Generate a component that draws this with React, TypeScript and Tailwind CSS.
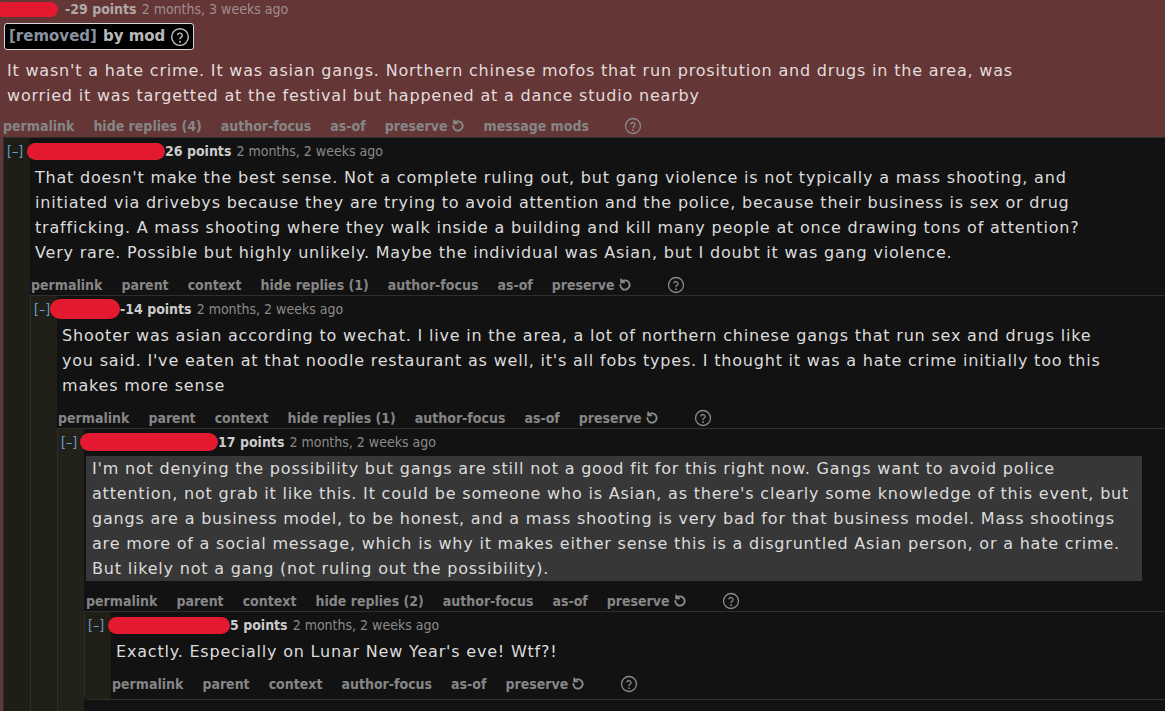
import { ReactNode } from "react";

const meta = "font-['DejaVu_Sans_Condensed','Liberation_Sans_Narrow','Liberation_Sans',sans-serif]";
const body = "font-['DejaVu_Sans','Verdana',sans-serif] text-[16px] leading-[25px] tracking-[0.8px] whitespace-nowrap";

const Help = ({ size = 18 }: { size?: number }) => (
  <svg width={size} height={size} viewBox="0 0 24 24" fill="none" stroke="currentColor" strokeWidth="1.7" strokeLinecap="round">
    <circle cx="12" cy="12" r="10" />
    <path d="M9.2 9.2a2.9 2.9 0 0 1 5.6 1c0 1.9-2.8 2.5-2.8 4" />
    <path d="M12 17.6h.01" strokeWidth="2.4" />
  </svg>
);

const Preserve = () => (
  <svg width="14" height="14" viewBox="0 0 24 24" fill="none" stroke="currentColor" strokeWidth="3.2" strokeLinecap="round">
    <path d="M4 12a8 8 0 1 0 2.6-5.9" />
    <path d="M5.5 2.5v5h5" />
  </svg>
);

// redaction scribble over the username
const Blob = ({ className }: { className: string }) => (
  <span className={`inline-block shrink-0 rounded-full bg-[#e3192f] ${className}`} />
);

const Buttons = ({ items, className = "" }: { items: string[]; className?: string }) => (
  <ul className={`flex items-center h-[16px] text-[14px] font-bold text-[#868686] ${meta} ${className}`}>
    {items.map((b) => (
      <li key={b} className="mr-[19px] flex items-center whitespace-nowrap">
        {b}
        {b === "preserve" && (
          <span className="ml-[3px] text-[#8a8a8a]">
            <Preserve />
          </span>
        )}
      </li>
    ))}
    <li className="ml-[16px] text-[#8a8a8a]">
      <Help />
    </li>
  </ul>
);

type CommentProps = {
  blob: string;
  points: string;
  lines: string[];
  buttons: string[];
  boxed?: boolean;
  last?: boolean;
  strip: string;
  children?: ReactNode;
};

const Comment = ({ blob, points, lines, buttons, boxed, last, strip, children }: CommentProps) => (
  <div
    className={`flex border-t border-l border-[#2e2e2e] ${strip} ${
      last ? "border-b rounded-bl-[5px]" : ""
    }`}
  >
    <div className={`w-[26px] shrink-0 pt-[5px] pl-[3px] text-[14px] leading-[16px] text-[#6a9ed3] ${meta}`}>
      [–]
    </div>
    <div className={`flex-1 min-w-0 bg-[#121212] ${last ? "pb-[7px]" : "pb-[2px]"}`}>
      <div className={`flex items-center h-[16px] mt-[5px] text-[14px] ${meta}`}>
        <Blob className={blob} />
        <span className="font-bold text-[#cbcbcb]">{points}</span>
        <span className="ml-[5px] text-[#8a8a8a]">{`2 months, 2 weeks ago`}</span>
      </div>
      <div
        className={`mt-[6px] text-[#dcdcdc] ${body} ${
          boxed ? "ml-[2px] w-[1056px] px-[6px] bg-[#373737]" : "pl-[5px]"
        }`}
      >
        {lines.map((l) => (
          <div key={l}>{l}</div>
        ))}
      </div>
      <Buttons items={buttons} className={`mt-[12px] ${boxed ? "pl-[2px]" : "pl-[1px]"}`} />
      {children && <div className="mt-[2px]">{children}</div>}
    </div>
  </div>
);

export default function App() {
  return (
    <div className="h-screen overflow-hidden bg-[#643636]">
      <div className={`flex items-center h-[16px] mt-[1px] text-[14px] ${meta}`}>
        <Blob className="w-[62px] h-[15px] ml-[-4px]" />
        <span className="ml-[7px] font-bold text-[#b0a9a9]">-29 points</span>
        <span className="ml-[5px] text-[#a08e8e]">2 months, 3 weeks ago</span>
      </div>
      <div className="mt-[6px] ml-[4px] inline-flex items-center h-[27px] pl-[4px] pr-[3px] bg-black border border-[#d8d8d8] rounded-[3px] font-['DejaVu_Sans',sans-serif] text-[15px] font-bold">
        <span className="text-[#8892a0]">[removed]</span>
        <span className="ml-[6px] text-[#b9b9b9]">by mod</span>
        <span className="ml-[5px] text-[#c0c0c0]">
          <Help size={20} />
        </span>
      </div>
      <div className={`mt-[8px] pl-[7px] text-[#e2dcdc] ${body}`}>
        <div>It wasn't a hate crime. It was asian gangs. Northern chinese mofos that run prositution and drugs in the area, was</div>
        <div>worried it was targetted at the festival but happened at a dance studio nearby</div>
      </div>
      <Buttons
        className="mt-[10px] pl-[3px] text-[#8e8585]"
        items={["permalink", "hide replies (4)", "author-focus", "as-of", "preserve", "message mods"]}
      />
      <div className="mt-[3px] ml-[3px]">
        <Comment
          strip="bg-[#1e1e16]"
          blob="w-[138px] h-[17px] ml-[-3px]"
          points="26 points"
          lines={[
            "That doesn't make the best sense. Not a complete ruling out, but gang violence is not typically a mass shooting, and",
            "initiated via drivebys because they are trying to avoid attention and the police, because their business is sex or drug",
            "trafficking. A mass shooting where they walk inside a building and kill many people at once drawing tons of attention?",
            "Very rare. Possible but highly unlikely. Maybe the individual was Asian, but I doubt it was gang violence.",
          ]}
          buttons={["permalink", "parent", "context", "hide replies (1)", "author-focus", "as-of", "preserve"]}
        >
          <Comment
            strip="bg-[#1f1f17]"
            blob="w-[70px] h-[20px] ml-[-7px]"
            points="-14 points"
            lines={[
              "Shooter was asian according to wechat. I live in the area, a lot of northern chinese gangs that run sex and drugs like",
              "you said. I've eaten at that noodle restaurant as well, it's all fobs types. I thought it was a hate crime initially too this",
              "makes more sense",
            ]}
            buttons={["permalink", "parent", "context", "hide replies (1)", "author-focus", "as-of", "preserve"]}
          >
            <Comment
              strip="bg-[#22211a]"
              blob="w-[138px] h-[18px] ml-[-4px]"
              points="17 points"
              boxed
              lines={[
                "I'm not denying the possibility but gangs are still not a good fit for this right now. Gangs want to avoid police",
                "attention, not grab it like this. It could be someone who is Asian, as there's clearly some knowledge of this event, but",
                "gangs are a business model, to be honest, and a mass shooting is very bad for that business model. Mass shootings",
                "are more of a social message, which is why it makes either sense this is a disgruntled Asian person, or a hate crime.",
                "But likely not a gang (not ruling out the possibility).",
              ]}
              buttons={["permalink", "parent", "context", "hide replies (2)", "author-focus", "as-of", "preserve"]}
            >
              <Comment
                strip="bg-[#1f1f17]"
                blob="w-[122px] h-[17px] ml-[-3px]"
                points="5 points"
                last
                lines={["Exactly. Especially on Lunar New Year's eve! Wtf?!"]}
                buttons={["permalink", "parent", "context", "author-focus", "as-of", "preserve"]}
              />
              <div className="h-[40px]" />
            </Comment>
          </Comment>
        </Comment>
      </div>
    </div>
  );
}
